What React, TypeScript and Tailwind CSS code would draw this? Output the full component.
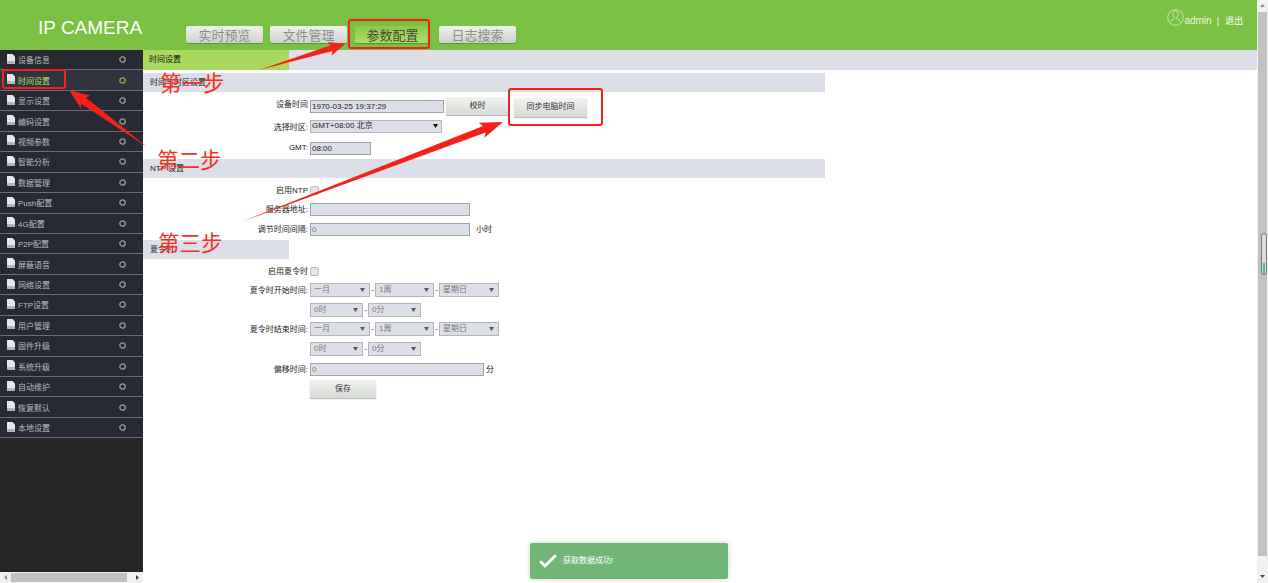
const FONT = "font-['Liberation_Sans','Noto_Sans_CJK_SC',sans-serif]";

const menu = ["设备信息","时间设置","显示设置","编码设置","视频参数","智能分析","数据管理","Push配置","4G配置","P2P配置","屏蔽语音","网络设置","FTP设置","用户管理","固件升级","系统升级","自动维护","恢复默认","本地设置"];

function arrowPoints(tx:number,ty:number,x:number,y:number,head:number,shaft:number,wing:number){
  const dx=x-tx,dy=y-ty,l=Math.hypot(dx,dy),ux=dx/l,uy=dy/l,nx=-uy,ny=ux;
  const bx=x-ux*head,by=y-uy*head,wx=x-ux*head*1.15,wy=y-uy*head*1.15;
  const p=[[tx,ty],[bx+nx*shaft,by+ny*shaft],[wx+nx*wing,wy+ny*wing],[x,y],[wx-nx*wing,wy-ny*wing],[bx-nx*shaft,by-ny*shaft]];
  return p.map(a=>a.map(v=>v.toFixed(1)).join(",")).join(" ");
}

function NavBtn({label,active,w}:{label:string;active?:boolean;w:string}){
  return <div className={`${w} h-[17px] pt-[2px] rounded-[2px] flex items-center justify-center text-[13px] shadow-[0_1px_1px_rgba(0,0,0,0.25)] ${active?"bg-gradient-to-b from-[#8ac94a] to-[#b0dc66] text-[#4a4a3a]":"bg-gradient-to-b from-[#f0f1ec] to-[#cdd2cc] text-[#8a8f8a]"}`}>{label}</div>;
}

function Label({children,cn=""}:{children:React.ReactNode;cn?:string}){
  return <div className={`w-[167px] shrink-0 pr-[2px] text-right text-[8px] leading-none text-[#222] ${cn}`}>{children}</div>;
}
function Field({w,children,dark}:{w:string;children?:React.ReactNode;dark?:boolean}){
  return <div className={`${w} h-[13px] bg-[#dcdfe8] border border-[#a3a3a3] ${dark?"text-[#222]":"text-[#777]"} text-[8px] leading-[11px] pl-[1px] whitespace-nowrap`}>{children}</div>;
}
function Sel({w,children}:{w:string;children:React.ReactNode}){
  return <div className={`${w} h-[14px] bg-[#dcdfe8] border border-[#b5b5b5] text-[#777] text-[8px] flex items-center justify-between pl-[3px] pr-[4px]`}><span>{children}</span><svg width="5" height="4" viewBox="0 0 5 4"><path d="M0 0h5L2.500 4z" fill="#555"/></svg></div>;
}
function Dash(){return <span className="w-[5px] text-center text-[8px] text-[#333]">-</span>;}
function Check(){return <div className="w-[9px] h-[9px] rounded-[2px] bg-[#e4e4e4] border border-[#bdbdbd]"/>;}
function Btn({w,h,children}:{w:string;h:string;children:React.ReactNode}){
  return <div className={`${w} ${h} shrink-0 flex items-center justify-center text-[8px] text-[#333] bg-gradient-to-b from-[#f2f3f0] to-[#d5dad4] shadow-[0_1px_1px_rgba(0,0,0,0.25)]`}>{children}</div>;
}
function Section({w,mt,children}:{w:string;mt:string;children:React.ReactNode}){
  return <div className={`${w} ${mt} h-[19px] bg-[#dcdfe8] flex items-center pl-[7px] text-[8px] text-[#222]`}>{children}</div>;
}

export default function App(){
  return (
    <div className={`${FONT} relative w-[1268px] h-[583px] overflow-hidden bg-white flex`}>
      <div className="w-[1257px] h-full flex flex-col">
        <header className="h-[50px] shrink-0 bg-[#7ac143] flex relative">
          <div className="w-[186px] shrink-0 pl-[38px] pt-[17px] text-[19px] leading-[22px] text-white">IP CAMERA</div>
          <nav className="flex gap-[7px] pt-[26px] h-full">
            <NavBtn label="实时预览" w="w-[77px]"/>
            <NavBtn label="文件管理" w="w-[77px]"/>
            <NavBtn label="参数配置" active w="w-[75px] ml-[1px]"/>
            <NavBtn label="日志搜索" w="w-[77px] ml-[2px]"/>
          </nav>
          <div className="ml-auto pr-[14px] pt-[9px] flex items-start text-[9px] text-white">
            <svg width="17" height="17" viewBox="0 0 17 17" fill="none" stroke="#dcefc4" strokeWidth="0.8"><circle cx="8.500" cy="8.500" r="7.800"/><path d="M6 3.800a2.700 3 0 0 1 5 0c.6 2-.6 4-1.300 5 0 1.500 2 2.400 3.500 3.200M6 3.800c-.6 2 .6 4 1.300 5 0 1.500-2 2.400-3.500 3.200"/></svg>
            <span className="mt-[5px] text-[10px] leading-[13px] text-[#eef7df]">admin</span>
            <span className="mt-[6px] ml-[5px] mr-[6px]">|</span>
            <span className="mt-[6px]">退出</span>
          </div>
        </header>
        <div className="flex flex-1 min-h-0">
          <aside className="w-[143px] shrink-0 bg-[#262626] flex flex-col">
            <div className="flex-1">
              {menu.map((m,i)=>(
                <div key={m} className={`h-[20.45px] pt-[3px] border-b border-[#6b6d72] flex items-center pl-[7px] pr-[17px] ${i===1?"bg-[#31343f] text-[#b5e061]":"bg-[#272a34] text-[#b9bbbf]"}`}>
                  <svg width="8" height="10" viewBox="0 0 8 10" className="-mt-[5px]"><path d="M0 0h5.500L8 2.500V10H0z" fill="#e8e8e8"/><path d="M0 7h8v3H0z" fill="#b5b5b5"/></svg>
                  <span className="ml-[3px] text-[8px]">{m}</span>
                  <svg width="7" height="7" viewBox="0 0 7 7" className="ml-auto -mt-[3px]" fill="none" stroke={i===1?"#7fae4c":"#9a9a9a"} strokeWidth="1.300"><circle cx="3.500" cy="3.500" r="2.700"/></svg>
                </div>
              ))}
            </div>
            <div className="h-[11px] bg-[#f1f1f1] flex items-start text-[#555] pl-[4px] pr-[4px]">
              <svg width="3" height="5" viewBox="0 0 3 5" className="mt-[3px]"><path d="M3 0v5L0 2.500z" fill="#888"/></svg>
              <div className="ml-[4px] w-[116px] h-[9px] mt-[1px] bg-[#c1c1c1]"/>
              <svg width="3" height="5" viewBox="0 0 3 5" className="ml-auto mt-[3px]"><path d="M0 0v5l3-2.500z" fill="#444"/></svg>
            </div>
          </aside>
          <main className="flex-1 min-w-0 relative">
            <div className="h-[20px] bg-[#dcdfe8]">
              <div className="w-[146px] h-full bg-[#a9d95f] flex items-center pl-[6px] text-[8px] text-[#111]">时间设置</div>
            </div>
            <Section w="w-[682px]" mt="mt-[3px]">时间与时区设置</Section>

            <div className="flex items-center mt-[4px] h-[20px]">
              <Label cn="mb-[2px]">设备时间</Label>
              <Field w="w-[134px]" dark>1970-03-25 19:37:29</Field>
              <Btn w="w-[63px] ml-[2px]" h="h-[18px]">校时</Btn>
              <Btn w="w-[73px] ml-[5px]" h="h-[19px] mt-[2px]">同步电脑时间</Btn>
            </div>
            <div className="flex items-center mt-[3px] h-[14px]">
              <Label cn="mt-[4px]">选择时区:</Label>
              <div className="w-[132px] h-[13px] bg-[#dcdfe8] border border-[#b5b5b5] text-[#222] text-[8px] flex items-center justify-between pl-[1px] pr-[3px]"><span>GMT+08:00 北京</span><svg width="5" height="4" viewBox="0 0 5 4"><path d="M0 0h5L2.500 4z" fill="#111"/></svg></div>
            </div>
            <div className="flex items-center mt-[9px] h-[13px]">
              <Label cn="mb-[1px]">GMT:</Label>
              <Field w="w-[61px]" dark>08:00</Field>
            </div>
            <Section w="w-[682px]" mt="mt-[4px]">NTP 设置</Section>

            <div className="flex items-center mt-[7px] h-[11px]">
              <Label>启用NTP</Label><Check/>
            </div>
            <div className="flex items-center mt-[7px] h-[13px]">
              <Label>服务器地址:</Label><Field w="w-[160px]"/>
            </div>
            <div className="flex items-center mt-[7px] h-[13px]">
              <Label>调节时间间隔:</Label><Field w="w-[160px]">0</Field>
              <span className="ml-[6px] text-[8px] text-[#222]">小时</span>
            </div>
            <Section w="w-[146px]" mt="mt-[4px]">夏令时</Section>

            <div className="flex items-center mt-[7px] h-[11px]">
              <Label>启用夏令时</Label><Check/>
            </div>
            <div className="flex items-center mt-[6px] h-[14px]">
              <Label cn="mt-[2px]">夏令时开始时间:</Label>
              <Sel w="w-[60px]">一月</Sel><Dash/><Sel w="w-[59px]">1周</Sel><Dash/><Sel w="w-[60px]">星期日</Sel>
            </div>
            <div className="flex items-center mt-[6px] h-[14px] pl-[167px]">
              <Sel w="w-[53px]">0时</Sel><Dash/><Sel w="w-[53px]">0分</Sel>
            </div>
            <div className="flex items-center mt-[5px] h-[14px]">
              <Label cn="mt-[2px]">夏令时结束时间:</Label>
              <Sel w="w-[60px]">一月</Sel><Dash/><Sel w="w-[59px]">1周</Sel><Dash/><Sel w="w-[60px]">星期日</Sel>
            </div>
            <div className="flex items-center mt-[6px] h-[14px] pl-[167px]">
              <Sel w="w-[53px]">0时</Sel><Dash/><Sel w="w-[53px]">0分</Sel>
            </div>
            <div className="flex items-center mt-[7px] h-[13px]">
              <Label>偏移时间:</Label><Field w="w-[174px]">0</Field>
              <span className="ml-[2px] text-[8px] text-[#222]">分</span>
            </div>
            <div className="pl-[167px] mt-[4px]"><Btn w="w-[66px]" h="h-[18px]">保存</Btn></div>

            <div className="absolute left-[387px] top-[493px] w-[198px] h-[36px] rounded-[2px] bg-[#72b676] shadow-[0_0_5px_rgba(0,0,0,0.2)] flex items-center pl-[9px] text-[8px] text-white">
              <svg width="18" height="14" viewBox="0 0 18 14" fill="none" stroke="#fff" strokeWidth="3" strokeLinecap="round" strokeLinejoin="round"><path d="M2 8l4 4 10-10"/></svg>
              <span className="ml-[6px]">获取数据成功!</span>
            </div>
          </main>
        </div>
      </div>

      <div className="w-[11px] h-full bg-[#f1f1f1] flex flex-col items-center relative">
        <svg width="5" height="3" viewBox="0 0 5 3" className="mt-[4px]"><path d="M0 3h5L2.500 0z" fill="#888"/></svg>
        <div className="mt-[5px] w-[9px] h-[544px] bg-[#c1c1c1]"/>
        <svg width="5" height="3" viewBox="0 0 5 3" className="mt-[19px]"><path d="M0 0h5L2.500 3z" fill="#444"/></svg>
        <div className="absolute left-[4px] top-[233px] w-[6px] h-[42px] rounded-[3px] border border-[#777] bg-[#dcdcdc] flex items-end justify-center overflow-hidden">
          <div className="w-[2px] h-[11px] bg-[#3ccb6d]"/>
        </div>
      </div>

      {/* annotations drawn on top of the screenshot */}
      <div className="absolute left-[348px] top-[19px] w-[82px] h-[30px] rounded-[3px] border-[2px] border-[#f5201a]"/>
      <div className="absolute left-[2px] top-[69px] w-[64px] h-[20px] rounded-[3px] border-[2px] border-[#f5201a]"/>
      <div className="absolute left-[508px] top-[88px] w-[95px] h-[38px] rounded-[3px] border-[2px] border-[#f5201a]"/>
      <svg className="absolute left-0 top-0 pointer-events-none" width="1268" height="583">
        <polygon points={arrowPoints(259,70,345,44,14,3,7)} fill="#f5201a"/>
        <polygon points={arrowPoints(147,147,69,90,18,4,8)} fill="#f5201a"/>
        <polygon points={arrowPoints(241,222,503,122,20,3.500,8)} fill="#f5201a"/>
      </svg>
      <div className="absolute left-[160px] top-[70px] text-[21.500px] leading-[28px] text-[#f5301f]">第一步</div>
      <div className="absolute left-[157px] top-[147px] text-[21.500px] leading-[28px] text-[#f5301f]">第二步</div>
      <div className="absolute left-[158px] top-[230px] text-[21.500px] leading-[28px] text-[#f5301f]">第三步</div>
    </div>
  );
}
